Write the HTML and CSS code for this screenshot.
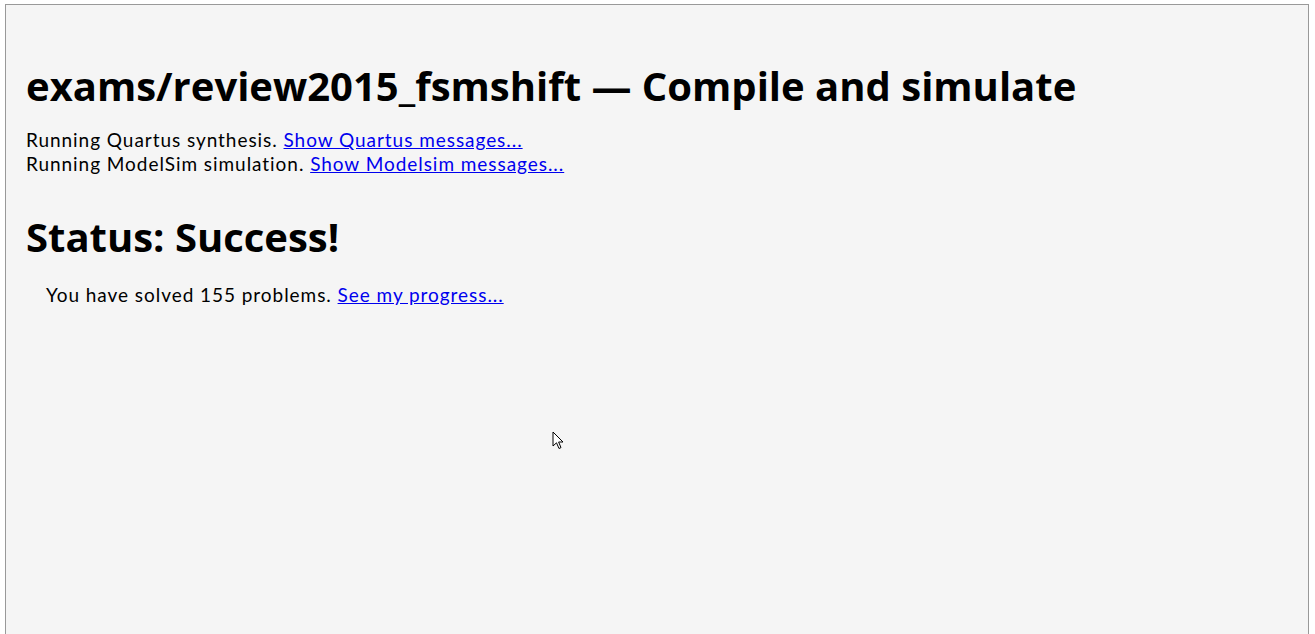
FILE: index.html
```html
<!DOCTYPE html>
<html>
<head>
<meta charset="utf-8">
<link rel="stylesheet" href="styles.css">
</head>
<body>
<div class="frame">
  <h1 class="title">exams/review2015_fsmshift — Compile and simulate</h1>
  <div class="log">
    <div>Running Quartus synthesis. <a href="#">Show Quartus messages...</a></div>
    <div>Running ModelSim simulation. <a href="#">Show Modelsim messages...</a></div>
  </div>
  <h1 class="status">Status: Success!</h1>
  <div class="solved">You have solved 155 problems. <a href="#">See my progress...</a></div>
</div>
<svg class="cursor" width="14" height="20" viewBox="0 0 14 20"><path d="M1 1 L1 15 L4.5 11.8 L7 17.5 L9 16.6 L6.6 11 L11 11 Z" fill="#fff" stroke="#000" stroke-width="1" stroke-linejoin="miter"/></svg>
</body>
</html>
```
FILE: styles.css
```css
html, body { margin: 0; padding: 0; background: #fff; }
body { padding: 4px 6px 0 5px; height: 634px; box-sizing: border-box; overflow: hidden; }
.frame {
  box-sizing: border-box;
  height: 630px;
  border: 1px solid #999;
  border-bottom: 0;
  background: #f5f5f5;
  padding: 54px 20px 0 20px;
  font-family: "Lato", "Open Sans", sans-serif;
  font-size: 19px;
  letter-spacing: 0.95px;
  color: #000;
}
.title, .status {
  font-family: "Open Sans", sans-serif;
  font-weight: 700;
  font-size: 40px;
  letter-spacing: 0;
  margin: 0;
  line-height: 54px;
}
.log { margin-top: 15px; line-height: 24px; }
.status { margin-top: 34px; }
.solved { margin-top: 19px; padding-left: 20px; line-height: 24px; }
a { color: #00e; text-decoration: underline; }
.cursor { position: absolute; left: 552px; top: 431px; }
```
